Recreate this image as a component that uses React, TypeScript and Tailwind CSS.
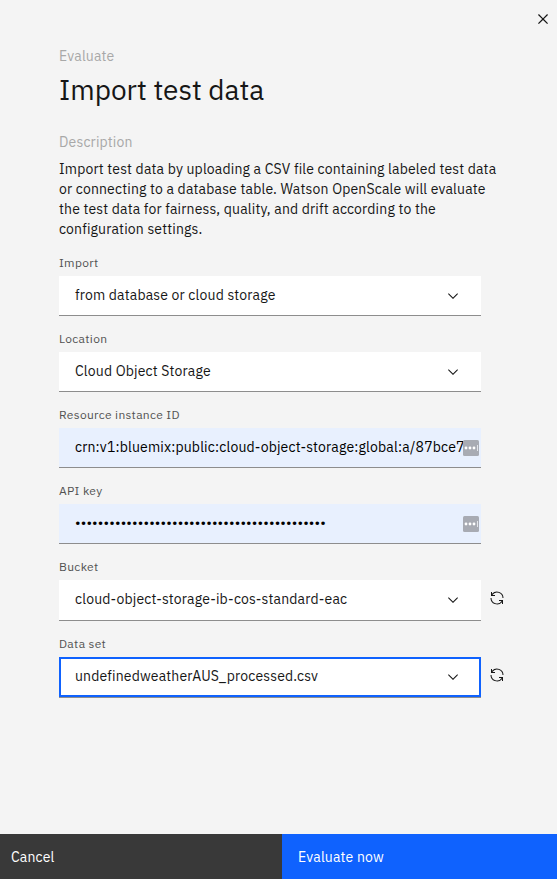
import React from "react";

const Chevron = () => (
  <svg width="16" height="16" viewBox="0 0 16 16" fill="#161616" className="shrink-0">
    <path d="M8 11L3 6 3.7 5.3 8 9.6 12.3 5.3 13 6z" />
  </svg>
);

const Renew = () => (
  <svg width="16" height="16" viewBox="0 0 32 32" fill="#161616" className="shrink-0">
    <path d="M12,10H6.78A11,11,0,0,1,27,16h2A13,13,0,0,0,6,7.68V4H4v8h8Z" />
    <path d="M20,22h5.22A11,11,0,0,1,5,16H3A13,13,0,0,0,26,24.32V28h2V20H20Z" />
  </svg>
);

const KeyBadge = () => (
  <svg width="16" height="16" viewBox="0 0 16 16" className="absolute top-3 right-0.5">
    <rect width="16" height="16" rx="1.5" fill="#a8abb3" />
    <circle cx="3" cy="8" r="1.4" fill="#fff" />
    <circle cx="7" cy="8" r="1.4" fill="#fff" />
    <circle cx="11" cy="8" r="1.4" fill="#fff" />
    <path d="M14.5 5v6" stroke="#e4e6ea" strokeWidth="1" />
  </svg>
);

type FieldProps = {
  label: string;
  value: string;
  boxClass: string;
  kind: "select" | "input";
  refresh?: boolean;
};

function Field({ label, value, boxClass, kind, refresh }: FieldProps) {
  return (
    <div>
      <div className="h-[21px] text-xs leading-4 tracking-[0.32px] whitespace-nowrap text-[#525252]">{label}</div>
      <div className="flex items-start gap-2">
        <div className={`relative flex w-[422px] shrink-0 justify-between border-b border-[#8d8d8d] pr-5 pl-4 ${boxClass}`}>
          <span className="text-sm leading-[39px] tracking-[0.16px] whitespace-nowrap">{value}</span>
          {kind === "select" ? (
            <span className="flex h-10 items-center"><Chevron /></span>
          ) : (
            <KeyBadge />
          )}
        </div>
        {refresh && <span className="pt-2.5"><Renew /></span>}
      </div>
    </div>
  );
}

export default function App() {
  return (
    <div className="flex h-[879px] w-[557px] flex-col overflow-hidden bg-[#f4f4f4] font-['IBM_Plex_Sans','Roboto','Liberation_Sans',sans-serif] text-[#161616]">
      <div className="flex h-[46px] shrink-0 justify-end pt-[9px] pr-1">
        <svg width="20" height="20" viewBox="0 0 16 16" fill="#161616">
          <path d="M12 4.7L11.3 4 8 7.3 4.7 4 4 4.7 7.3 8 4 11.3 4.7 12 8 8.7 11.3 12 12 11.3 8.7 8z" />
        </svg>
      </div>
      <main className="flex-1 pl-[59px]">
        <div className="h-6 text-sm leading-5 tracking-[0.16px] text-[#a8a8a8]">Evaluate</div>
        <h1 className="h-[62px] text-[28px] leading-10 font-normal">Import test data</h1>
        <div className="h-[27px] text-sm leading-5 tracking-[0.16px] text-[#a8a8a8]">Description</div>
        <p className="h-24 text-sm leading-5 tracking-[0.16px] whitespace-nowrap">
          Import test data by uploading a CSV file containing labeled test data<br />
          or connecting to a database table. Watson OpenScale will evaluate<br />
          the test data for fairness, quality, and drift according to the<br />
          configuration settings.
        </p>
        <div className="flex flex-col gap-[15px]">
          <Field kind="select" label="Import" value="from database or cloud storage" boxClass="h-10 bg-white" />
          <Field kind="select" label="Location" value="Cloud Object Storage" boxClass="h-10 bg-white" />
          <Field kind="input" label="Resource instance ID" value="crn:v1:bluemix:public:cloud-object-storage:global:a/87bce7" boxClass="h-10 bg-[#e8f0fe] text-black" />
          <Field kind="input" label="API key" value="••••••••••••••••••••••••••••••••••••••••••••" boxClass="h-10 bg-[#e8f0fe] text-black" />
          <Field kind="select" refresh label="Bucket" value="cloud-object-storage-ib-cos-standard-eac" boxClass="h-[41px] bg-white" />
          <Field kind="select" refresh label="Data set" value="undefinedweatherAUS_processed.csv" boxClass="h-[41px] bg-white shadow-[inset_0_0_0_2px_#0f62fe]" />
        </div>
      </main>
      <footer className="flex h-[45px] shrink-0 text-sm leading-[46px] tracking-[0.16px] text-white">
        <div className="w-[282px] bg-[#393939] pl-[11px]">Cancel</div>
        <div className="flex-1 bg-[#0f62fe] pl-4">Evaluate now</div>
      </footer>
    </div>
  );
}
